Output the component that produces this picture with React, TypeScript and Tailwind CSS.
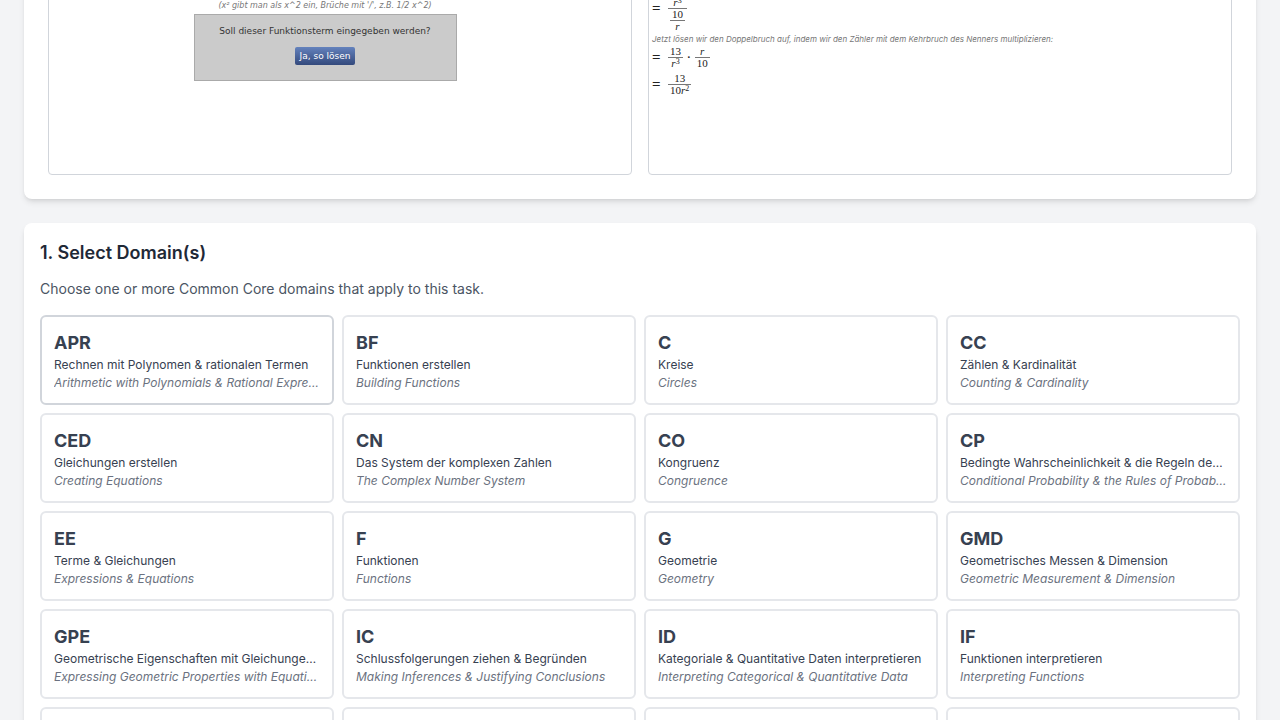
import type { ReactNode } from "react";

type Domain = { code: string; de: string; en: string };

const domains: Domain[] = [
  { code: "APR", de: "Rechnen mit Polynomen & rationalen Termen", en: "Arithmetic with Polynomials & Rational Expressions" },
  { code: "BF", de: "Funktionen erstellen", en: "Building Functions" },
  { code: "C", de: "Kreise", en: "Circles" },
  { code: "CC", de: "Zählen & Kardinalität", en: "Counting & Cardinality" },
  { code: "CED", de: "Gleichungen erstellen", en: "Creating Equations" },
  { code: "CN", de: "Das System der komplexen Zahlen", en: "The Complex Number System" },
  { code: "CO", de: "Kongruenz", en: "Congruence" },
  { code: "CP", de: "Bedingte Wahrscheinlichkeit & die Regeln der Wahrscheinlichkeit", en: "Conditional Probability & the Rules of Probability" },
  { code: "EE", de: "Terme & Gleichungen", en: "Expressions & Equations" },
  { code: "F", de: "Funktionen", en: "Functions" },
  { code: "G", de: "Geometrie", en: "Geometry" },
  { code: "GMD", de: "Geometrisches Messen & Dimension", en: "Geometric Measurement & Dimension" },
  { code: "GPE", de: "Geometrische Eigenschaften mit Gleichungen ausdrücken", en: "Expressing Geometric Properties with Equations" },
  { code: "IC", de: "Schlussfolgerungen ziehen & Begründen", en: "Making Inferences & Justifying Conclusions" },
  { code: "ID", de: "Kategoriale & Quantitative Daten interpretieren", en: "Interpreting Categorical & Quantitative Data" },
  { code: "IF", de: "Funktionen interpretieren", en: "Interpreting Functions" },
  { code: "LE", de: "Lineare, quadratische & exponentielle Modelle", en: "Linear, Quadratic & Exponential Models" },
  { code: "MD", de: "Messen & Daten", en: "Measurement & Data" },
  { code: "MG", de: "Modellieren mit Geometrie", en: "Modeling with Geometry" },
  { code: "NBT", de: "Zahlen & Rechnen im Zehnersystem", en: "Number & Operations in Base Ten" },
];

function Frac({ top, bottom }: { top: ReactNode; bottom: ReactNode }) {
  return (
    <span className="inline-flex flex-col items-center">
      <span className="flex px-0.5">{top}</span>
      <span className="h-px w-full bg-[#777]" />
      <span className="flex px-0.5">{bottom}</span>
    </span>
  );
}

function Power({ base, exp }: { base: ReactNode; exp: string }) {
  return (
    <span className="flex">
      {base}
      <sup className="top-0 text-[8px] leading-[8px]">{exp}</sup>
    </span>
  );
}

function Row({ children }: { children: ReactNode }) {
  return (
    <div className="flex items-center gap-1">
      <span className="w-3 text-[15px] font-bold">=</span>
      {children}
    </div>
  );
}

function DomainCard({ domain, active }: { domain: Domain; active: boolean }) {
  return (
    <button
      type="button"
      className={
        active
          ? "min-w-0 rounded-md border-2 border-[#d1d5db] bg-white p-3 text-left"
          : "min-w-0 rounded-md border-2 border-[#e5e7eb] bg-white p-3 text-left"
      }
    >
      <span className="block text-lg leading-7 font-bold text-[#374151]">{domain.code}</span>
      <span className="block truncate text-xs leading-4 text-[#374151]">{domain.de}</span>
      <span className="mt-0.5 -mr-0.5 block truncate text-xs leading-4 text-[#6b7280] italic">{domain.en}</span>
    </button>
  );
}

export default function App() {
  const r = <i>r</i>;
  return (
    <div className="h-screen overflow-hidden bg-[#f3f4f6] font-['Inter',sans-serif] antialiased">
      <main className="-mt-12 flex flex-col gap-6 px-6">
        <section className="grid grid-cols-2 gap-4 rounded-lg bg-white p-6 shadow-md">
          <div className="flex h-[199px] flex-col items-center rounded border border-[#d1d5db] pt-[23px] pr-[30px] font-['DejaVu_Sans',sans-serif]">
            <p className="text-[8px] leading-3 text-[#777] italic">
              (x² gibt man als x^2 ein, Brüche mit '/', z.B. 1/2 x^2)
            </p>
            <div className="mt-0.5 flex w-[263px] flex-col items-center gap-2 border border-[#aaa] bg-[#cbcbcb] pt-2 pb-[15px]">
              <p className="text-[9px] leading-4 text-[#333]">Soll dieser Funktionsterm eingegeben werden?</p>
              <button
                type="button"
                className="rounded-xs bg-gradient-to-b from-[#6482bd] to-[#344a7d] px-[5px] text-[9px] leading-[18px] text-white"
              >
                Ja, so lösen
              </button>
            </div>
          </div>
          <div className="h-[199px] rounded border border-[#d1d5db] pt-2 pl-[3px] font-['Liberation_Serif',serif] text-[11px] leading-[11px] text-[#222]">
            <Row>
              <Frac
                top={<Frac top="13" bottom={<Power base={r} exp="3" />} />}
                bottom={<Frac top="10" bottom={r} />}
              />
            </Row>
            <p className="font-['Inter',sans-serif] text-[8px] leading-[14px] text-[#777] italic">
              Jetzt lösen wir den Doppelbruch auf, indem wir den Zähler mit dem Kehrbruch des Nenners multiplizieren:
            </p>
            <Row>
              <Frac top="13" bottom={<Power base={r} exp="3" />} />
              <span className="font-bold">·</span>
              <Frac top={r} bottom="10" />
            </Row>
            <div className="mt-1">
              <Row>
                <Frac top="13" bottom={<Power base={<>10{r}</>} exp="2" />} />
              </Row>
            </div>
          </div>
        </section>

        <section className="rounded-lg bg-white p-4 shadow-md">
          <h2 className="text-lg leading-7 font-semibold text-[#1f2937]">1. Select Domain(s)</h2>
          <p className="mt-3 mb-4 text-sm leading-5 text-[#4b5563]">
            Choose one or more Common Core domains that apply to this task.
          </p>
          <div className="grid grid-cols-4 gap-2">
            {domains.map((domain, index) => (
              <DomainCard key={domain.code} domain={domain} active={index === 0} />
            ))}
          </div>
        </section>
      </main>
    </div>
  );
}
